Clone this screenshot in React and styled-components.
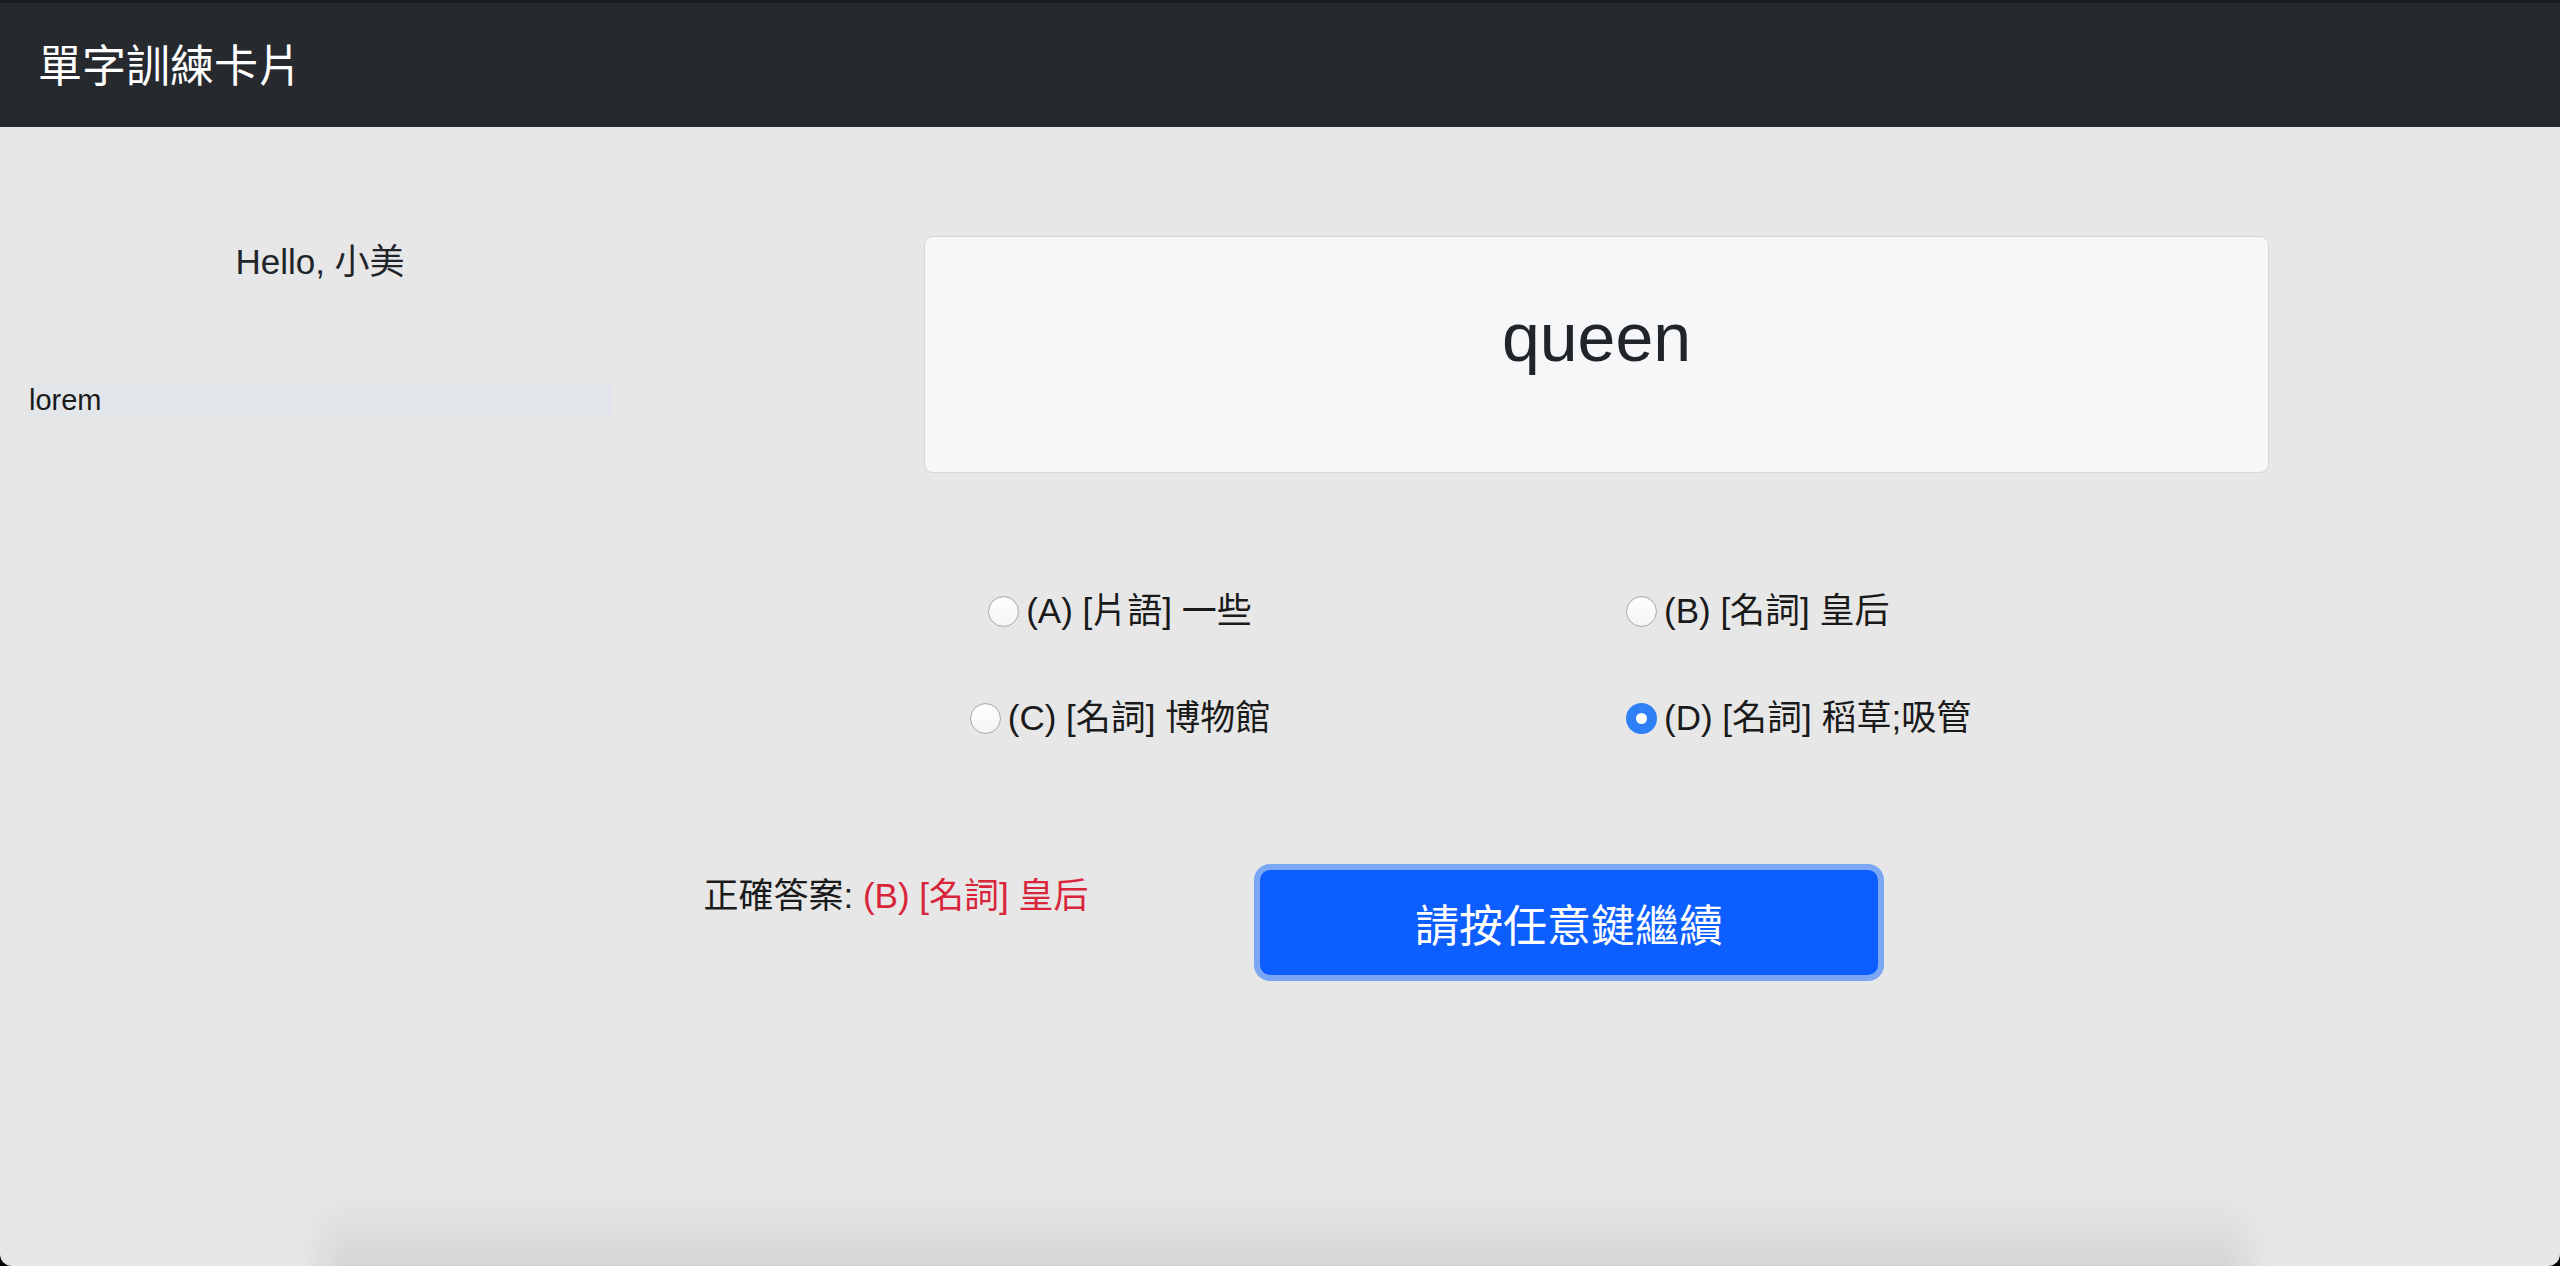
import React from "react";
import styled, { createGlobalStyle } from "styled-components";

const GlobalStyle = createGlobalStyle`
  html, body { margin: 0; padding: 0; background: #000; }
  body {
    font-family: "Liberation Sans", "Noto Sans CJK TC", sans-serif;
    color: #212529;
  }
  * { box-sizing: border-box; }
`;

const FONT = `"Liberation Sans", "Noto Sans CJK TC", sans-serif`;

const Page = styled.div`
  height: 100vh;
  display: flex;
  flex-direction: column;
  background: #e7e7e7;
  border-radius: 0 0 12px 12px;
  overflow: hidden;
`;

const NavBar = styled.header`
  height: 127px;
  flex: none;
  background: #262a2f;
  border-top: 3px solid #1c1d1f;
  display: flex;
  align-items: center;
  padding: 4px 0 0 38px;
`;

const Brand = styled.div`
  font-family: ${FONT};
  font-size: 44px;
  line-height: 1;
  color: #ffffff;
`;

const Main = styled.main`
  flex: 1;
  display: grid;
  grid-template-columns: 640px 1fr;
`;

const Sidebar = styled.aside`
  padding: 109px 28px 0 28px;
  display: flex;
  flex-direction: column;
`;

const Greeting = styled.div`
  font-size: 35px;
  line-height: 52px;
  text-align: center;
`;

const ListItem = styled.div`
  margin-top: 96px;
  height: 33px;
  background: #e2e6ea;
  font-size: 29px;
  line-height: 33px;
  padding-left: 1px;
  color: #1a1a1a;
`;

const Stage = styled.section`
  padding-top: 109px;
  display: flex;
  flex-direction: column;
`;

const Card = styled.div`
  margin-left: 284px;
  width: 1345px;
  background: #f6f7f9;
  border: 1px solid #d4d6d9;
  border-radius: 9px;
  padding: 59px 32px 94px;
  text-align: center;
`;

const Word = styled.div`
  font-size: 68px;
  line-height: 82px;
  color: #212529;
`;

const Choices = styled.div`
  margin-top: 112px;
  display: grid;
  grid-template-columns: 960px 960px;
  row-gap: 55px;
`;

const Choice = styled.label`
  display: flex;
  align-items: center;
  justify-content: ${(p) => (p.$align === "center" ? "center" : "flex-start")};
  padding-left: ${(p) => (p.$align === "center" ? "0" : "26px")};
  gap: 7px;
  font-size: 35px;
  line-height: 52px;
  color: #1a1a1a;
  cursor: pointer;
`;

const Radio = styled.span`
  flex: none;
  width: 31px;
  height: 31px;
  border-radius: 50%;
  display: flex;
  align-items: center;
  justify-content: center;
  background: ${(p) => (p.$checked ? "#2f80f6" : "linear-gradient(#ffffff, #f4f4f4)")};
  border: ${(p) => (p.$checked ? "none" : "1.5px solid #a9a9a9")};
  box-shadow: ${(p) => (p.$checked ? "none" : "inset 0 1px 1px rgba(0,0,0,0.06)")};

  &::after {
    content: "";
    display: ${(p) => (p.$checked ? "block" : "none")};
    width: 11px;
    height: 11px;
    border-radius: 50%;
    background: #ffffff;
  }
`;

const Footer = styled.div`
  margin-top: 126px;
  display: grid;
  grid-template-columns: 512px 834px;
  align-items: start;
`;

const Answer = styled.div`
  font-size: 35px;
  line-height: 52px;
  text-align: center;
  color: #1a1a1a;
`;

const Danger = styled.span`
  color: #d9253b;
`;

const ContinueButton = styled.button`
  justify-self: center;
  width: 618px;
  height: 105px;
  border: none;
  border-radius: 10px;
  background: #0d5efe;
  color: #ffffff;
  font-family: ${FONT};
  font-size: 44px;
  box-shadow: 0 0 0 6px #7aa6f4;
  cursor: pointer;
`;

const ShadowBand = styled.div`
  flex: none;
  height: 72px;
  margin: 0 290px 0 300px;
  background: linear-gradient(to bottom, rgba(0, 0, 0, 0), rgba(0, 0, 0, 0.075));
  -webkit-mask-image: linear-gradient(to right, transparent, #000 45px, #000 calc(100% - 45px), transparent);
  mask-image: linear-gradient(to right, transparent, #000 45px, #000 calc(100% - 45px), transparent);
`;

const options = [
  { key: "A", text: "(A) [片語] 一些", align: "center" },
  { key: "B", text: "(B) [名詞] 皇后", align: "start" },
  { key: "C", text: "(C) [名詞] 博物館", align: "center" },
  { key: "D", text: "(D) [名詞] 稻草;吸管", align: "start" },
];

export default function App() {
  const selected = "D";
  return (
    <>
      <GlobalStyle />
      <Page>
        <NavBar>
          <Brand>單字訓練卡片</Brand>
        </NavBar>
        <Main>
          <Sidebar>
            <Greeting>Hello, 小美</Greeting>
            <ListItem>lorem</ListItem>
          </Sidebar>
          <Stage>
            <Card>
              <Word>queen</Word>
            </Card>
            <Choices>
              {options.map((o) => (
                <Choice key={o.key} $align={o.align}>
                  <Radio $checked={o.key === selected} />
                  <span>{o.text}</span>
                </Choice>
              ))}
            </Choices>
            <Footer>
              <Answer>
                正確答案: <Danger>(B) [名詞] 皇后</Danger>
              </Answer>
              <ContinueButton>請按任意鍵繼續</ContinueButton>
            </Footer>
          </Stage>
        </Main>
        <ShadowBand />
      </Page>
    </>
  );
}
